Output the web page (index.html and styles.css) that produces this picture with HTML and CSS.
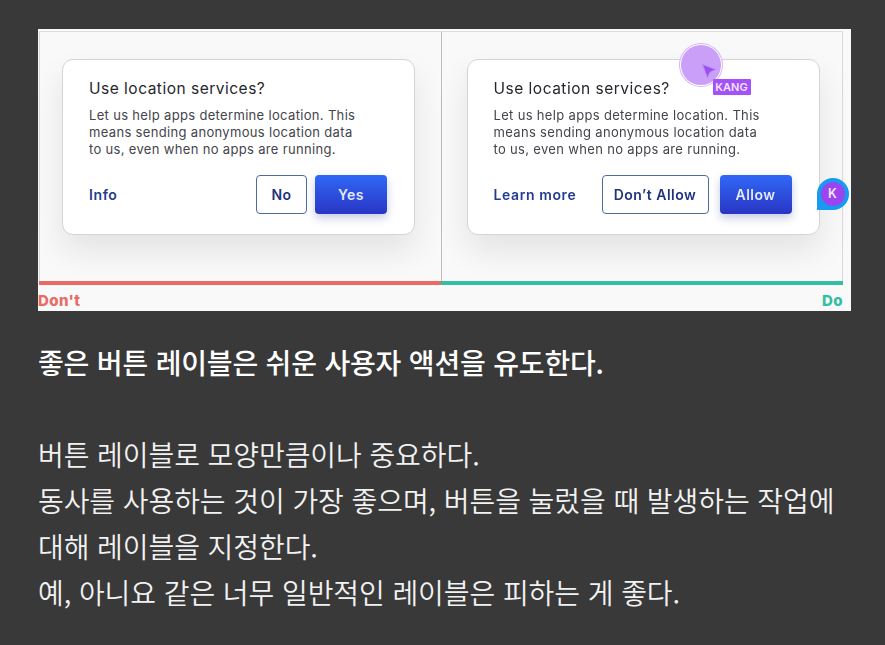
FILE: index.html
```html
<!DOCTYPE html>
<html lang="ko">
<head>
    <meta charset="UTF-8">
    <meta name="viewport" content="width=device-width, initial-scale=1.0">
    <title>버튼 레이블</title>
    <link rel="stylesheet" href="styles.css">
</head>
<body>
    <div class="figure">
        <div class="compare">
            <div class="panel panel-dont">
                <div class="card">
                    <h3>Use location services?</h3>
                    <p>Let us help apps determine location. This<br>means sending anonymous location data<br>to us, even when no apps are running.</p>
                    <div class="actions">
                        <span class="link">Info</span>
                        <span class="btn btn-outline btn-no">No</span>
                        <span class="btn btn-fill">Yes</span>
                    </div>
                </div>
            </div>
            <div class="panel panel-do">
                <div class="card">
                    <h3>Use location services?</h3>
                    <p>Let us help apps determine location. This<br>means sending anonymous location data<br>to us, even when no apps are running.</p>
                    <div class="actions">
                        <span class="link">Learn more</span>
                        <span class="btn btn-outline btn-dont">Don’t Allow</span>
                        <span class="btn btn-fill">Allow</span>
                    </div>
                </div>
                <div class="cursor-halo">
                    <svg class="cursor-arrow" width="16" height="16" viewBox="0 0 16 16">
                        <path d="M1.5 1.5 L14.5 6.5 L9 9 L6.5 14.5 Z" fill="#9a4cf5" stroke="#b98af2" stroke-width="1"/>
                    </svg>
                </div>
                <span class="cursor-tag">KANG</span>
                <span class="avatar"><span>K</span></span>
            </div>
        </div>
        <div class="bars">
            <div class="bar bar-dont"></div>
            <div class="bar bar-do"></div>
        </div>
        <div class="labels">
            <span class="label-dont">Don't</span>
            <span class="label-do">Do</span>
        </div>
    </div>

    <div class="copy">
        <p class="lead">좋은 버튼 레이블은 쉬운 사용자 액션을 유도한다.</p>
        <p>버튼 레이블로 모양만큼이나 중요하다.<br>동사를 사용하는 것이 가장 좋으며, 버튼을 눌렀을 때 발생하는 작업에<br>대해 레이블을 지정한다.<br>예, 아니요 같은 너무 일반적인 레이블은 피하는 게 좋다.</p>
    </div>
</body>
</html>
```

FILE: styles.css
```css
body {
    margin: 0;
    background: #393939;
    font-family: "Noto Sans CJK KR", "Noto Sans", sans-serif;
    padding: 29px 34px 0 38px;
    height: 645px;
    box-sizing: border-box;
    overflow: hidden;
}
.figure {
    height: 282px;
    background: #f9f9f9;
    padding: 2px 8px 0 1px;
    box-sizing: border-box;
    font-family: Inter, "Liberation Sans", sans-serif;
    filter: blur(0.5px);
    display: flex;
    flex-direction: column;
}
.compare {
    display: flex;
    height: 250px;
    border-top: 1px solid #dcdcdc;
    box-sizing: border-box;
}
.panel {
    position: relative;
    box-sizing: border-box;
    padding-top: 27px;
}
.panel-dont {
    width: 403px;
    padding-left: 22px;
    border-left: 1px solid #d8d8d8;
    border-right: 1px solid #bdbdbd;
}
.panel-do {
    width: 402px;
    padding-left: 25px;
    border-right: 1px solid #d8d8d8;
}
.card {
    width: 353px;
    height: 176px;
    box-sizing: border-box;
    padding: 19px 27px 0 26px;
    background: #fff;
    border: 1px solid #d4d4d8;
    border-radius: 11px;
    box-shadow: 0 16px 32px rgba(0, 0, 0, 0.09);
}
.card h3 {
    margin: 0;
    font-size: 15.5px;
    line-height: 20px;
    font-weight: 400;
    color: #26262c;
    letter-spacing: 0.5px;
    white-space: nowrap;
}
.card p {
    margin: 8px 0 0;
    font-size: 13px;
    line-height: 17px;
    color: #44444c;
    letter-spacing: 0.33px;
    white-space: nowrap;
}
.actions {
    display: flex;
    align-items: center;
    gap: 8px;
    margin-top: 17px;
}
.link {
    margin-right: auto;
    font-size: 14px;
    font-weight: 600;
    letter-spacing: 0.6px;
    color: #243c8c;
}
.btn {
    height: 39px;
    box-sizing: border-box;
    border-radius: 4px;
    display: flex;
    align-items: center;
    justify-content: center;
    font-size: 14px;
    font-weight: 600;
    letter-spacing: 0.5px;
}
.btn-outline {
    background: #fff;
    border: 1.5px solid #4f6a9f;
    color: #1f337f;
}
.btn-no {
    width: 51px;
}
.btn-dont {
    width: 107px;
    margin-right: 3px;
}
.btn-fill {
    width: 72px;
    color: #e4e9fb;
    background: linear-gradient(#3068f6, #2a35c4);
    box-shadow: 0 4px 9px rgba(30, 50, 150, 0.25);
}
.cursor-halo {
    position: absolute;
    left: 239px;
    top: 13px;
    width: 40px;
    height: 40px;
    border-radius: 50%;
    background: #c99ff8;
    box-shadow: 0 0 0 1px #fff, 0 0 0 2px #d6b6fa;
}
.cursor-arrow {
    position: absolute;
    left: 20px;
    top: 18px;
}
.cursor-tag {
    position: absolute;
    left: 271px;
    top: 47px;
    width: 38px;
    height: 16px;
    border-radius: 1px;
    background: #a452f7;
    color: #f0e4fe;
    font-size: 11px;
    font-weight: 600;
    line-height: 16px;
    text-align: center;
}
.avatar {
    position: absolute;
    left: 375px;
    top: 146px;
    width: 32px;
    height: 32px;
    box-sizing: border-box;
    padding: 4px;
    background: #189af0;
    border-radius: 50% 50% 50% 0;
}
.avatar span {
    display: block;
    height: 24px;
    border-radius: 50%;
    background: #9a45f0;
    color: #f2e6fe;
    font-size: 12.5px;
    font-weight: 600;
    line-height: 24px;
    text-align: center;
}
.bars {
    display: flex;
    height: 4px;
}
.bar-dont {
    width: 402px;
    background: #e96b66;
}
.bar-do {
    flex: 1;
    background: #33bfa3;
}
.labels {
    display: flex;
    justify-content: space-between;
    font-size: 15px;
    font-weight: 800;
    letter-spacing: 0.4px;
    line-height: 18px;
    margin: 7px 0 0 -1px;
}
.label-dont {
    color: #e96b66;
}
.label-do {
    color: #33bfa3;
}
.copy {
    margin-top: 28px;
    color: #f2f2f2;
    font-size: 28px;
    line-height: 46px;
    letter-spacing: -0.08px;
    font-weight: 350;
}
.copy p {
    margin: 0;
}
.copy .lead {
    font-weight: 500;
    color: #fff;
    letter-spacing: -0.18px;
    margin-bottom: 46px;
}
```
